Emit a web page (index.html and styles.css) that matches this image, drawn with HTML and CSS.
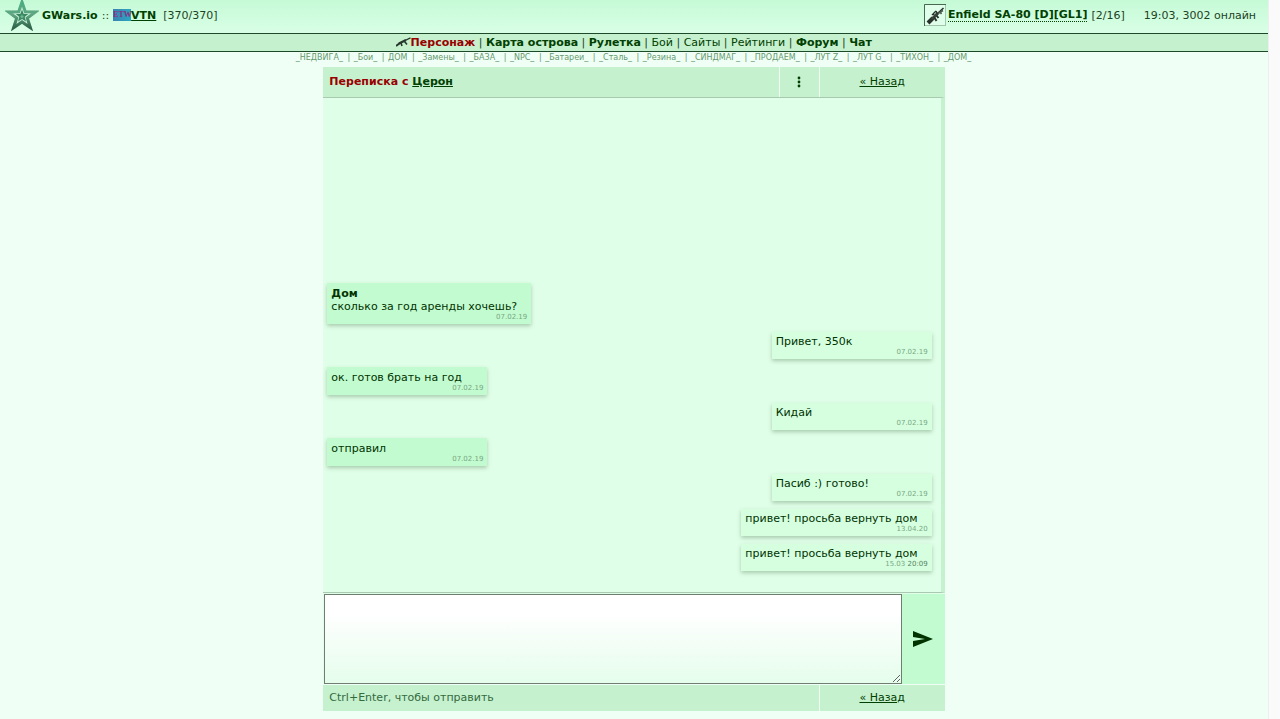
FILE: index.html
```html
<!DOCTYPE html>
<html lang="ru">

<head>
    <meta charset="UTF-8">
    <meta name="viewport" content="width=device-width, initial-scale=1.0">
    <title>GWars.io - Переписка</title>
    <link rel="stylesheet" href="styles.css">
</head>

<body>
    <header class="topbar">
        <svg class="logo" viewBox="0 0 34 32" aria-hidden="true">
            <defs>
                <linearGradient id="star" x1="0" y1="0" x2="0" y2="1">
                    <stop offset="0" stop-color="#4cae80"/>
                    <stop offset="0.5" stop-color="#5fa582"/>
                    <stop offset="1" stop-color="#2f6649"/>
                </linearGradient>
            </defs>
            <path d="M17 0L21.2 11.5L33.5 11.8L23.8 19.3L27.5 31L17 24.2L6.5 31L10.2 19.3L0.5 11.8L12.8 11.5Z" fill="#a9cdb8"/>
            <path d="M17 3L20.3 12.8L30.5 12.9L22.3 19.1L25.4 28.7L17 22.9L8.6 28.7L11.7 19.1L3.5 12.9L13.7 12.8Z" fill="#c8f0d8" stroke="url(#star)" stroke-width="3"/>
            <path d="M17 10.5L18.7 15L23.2 15.1L19.7 18L21 22.5L17 19.9L13 22.5L14.3 18L10.8 15.1L15.3 15Z" fill="#398762"/>
            <path d="M17 15L17.7 16.8L19.4 17L18 18L18.5 19.6L17 18.7L15.5 19.6L16 18L14.6 17L16.3 16.8Z" fill="#6db68d"/>
        </svg>
        <a class="site" href="#">GWars.io</a>
        <span class="colons">::</span>
        <span class="syndicate">ETW</span><a class="player" href="#">VTN</a>
        <span class="health">[370/370]</span>
        <span class="weapon">
            <svg viewBox="0 0 22 22" aria-hidden="true">
                <rect x="0.5" y="0.5" width="21" height="21" fill="#dfffea" stroke="#a3c4ac"/>
                <path d="M0.5 22V0.5H22" fill="none" stroke="#47694f"/>
                <path d="M4 19L9 14" stroke="#28332b" stroke-width="4"/>
                <path d="M8 15L14 9" stroke="#3a463d" stroke-width="3"/>
                <path d="M13 10L19.5 4" stroke="#28332b" stroke-width="1.6"/>
                <path d="M8 11L12 7M10 11L9 9M13 9L12 7" stroke="#28332b" stroke-width="1.4"/>
                <path d="M10 13L12.5 17M12.5 11.5L14.5 14" stroke="#28332b" stroke-width="2"/>
                <path d="M14 9.5L19 6.5M16 8L17.5 10" stroke="#4c5a50" stroke-width="1.5"/>
            </svg>
            <a href="#">Enfield SA-80 [D][GL1]</a> [2/16]
        </span>
        <span class="online">19:03, 3002 онлайн</span>
    </header>

    <nav class="menu">
        <svg class="gun" viewBox="0 0 15 10" aria-hidden="true">
            <path d="M0 9L4 6" stroke="#25382b" stroke-width="2"/>
            <path d="M3 6.5L10 3" stroke="#25382b" stroke-width="2.4"/>
            <path d="M9 3.5L14.5 0.8" stroke="#25382b" stroke-width="1.3"/>
            <path d="M5 6L6 9M8.5 4.5L11 7.5" stroke="#25382b" stroke-width="1.6"/>
        </svg>
        <a class="active" href="#">Персонаж</a> |
        <a class="main" href="#">Карта острова</a> |
        <a class="main" href="#">Рулетка</a> |
        <a href="#">Бой</a> |
        <a href="#">Сайты</a> |
        <a href="#">Рейтинги</a> |
        <a class="main" href="#">Форум</a> |
        <a class="main" href="#">Чат</a>
    </nav>

    <nav class="quick">
        <a href="#">_НЕДВИГА_</a> | <a href="#">_Бои_</a> | <a href="#">ДОМ</a> | <a href="#">_Замены_</a> | <a href="#">_БАЗА_</a> | <a href="#">_NPC_</a> | <a href="#">_Батареи_</a> | <a href="#">_Сталь_</a> | <a href="#">_Резина_</a> | <a href="#">_СИНДМАГ_</a> | <a href="#">_ПРОДАЕМ_</a> | <a href="#">_ЛУТ Z_</a> | <a href="#">_ЛУТ G_</a> | <a href="#">_ТИХОН_</a> | <a href="#">_ДОМ_</a>
    </nav>

    <main class="chat">
        <div class="row head">
            <h1>Переписка с <a href="#">Церон</a></h1>
            <button class="more" type="button" aria-label="Меню">
                <svg viewBox="0 0 4 12" aria-hidden="true">
                    <circle cx="2" cy="2" r="1.4"/>
                    <circle cx="2" cy="6" r="1.4"/>
                    <circle cx="2" cy="10" r="1.4"/>
                </svg>
            </button>
            <div class="back"><a href="#">« Назад</a></div>
        </div>

        <div class="messages">
            <div class="msg in">
                <p><b>Дом</b><br>сколько за год аренды хочешь?</p>
                <time>07.02.19</time>
            </div>
            <div class="msg out">
                <p>Привет, 350к</p>
                <time>07.02.19</time>
            </div>
            <div class="msg in">
                <p>ок. готов брать на год</p>
                <time>07.02.19</time>
            </div>
            <div class="msg out">
                <p>Кидай</p>
                <time>07.02.19</time>
            </div>
            <div class="msg in">
                <p>отправил</p>
                <time>07.02.19</time>
            </div>
            <div class="msg out">
                <p>Пасиб :) готово!</p>
                <time>07.02.19</time>
            </div>
            <div class="msg out">
                <p>привет! просьба вернуть дом</p>
                <time>13.04.20</time>
            </div>
            <div class="msg out">
                <p>привет! просьба вернуть дом</p>
                <time>15.03 <span>20:09</span></time>
            </div>
        </div>

        <form class="compose">
            <textarea aria-label="Сообщение"></textarea>
            <button class="send" type="button" aria-label="Отправить">
                <svg viewBox="0 0 20 16" aria-hidden="true">
                    <path d="M0 0L20 8L0 16V10L12 8L0 6Z"/>
                </svg>
            </button>
        </form>

        <div class="row foot">
            <div class="hint">Ctrl+Enter, чтобы отправить</div>
            <div class="back"><a href="#">« Назад</a></div>
        </div>
    </main>
</body>

</html>
```
FILE: styles.css
```css
* {
    box-sizing: border-box;
}

html {
    background: #fafafa;
    padding-right: 12px;
}

body {
    margin: 0;
    min-height: 100vh;
    display: flex;
    flex-direction: column;
    background: #f0fff5;
    color: #1d4324;
    font-family: Verdana, "DejaVu Sans", sans-serif;
    font-size: 11px;
    line-height: 13px;
    box-shadow: 1px 0 0 #ededf2;
}

a {
    color: #004000;
}

button {
    border: 0;
    padding: 0;
    cursor: pointer;
}

svg {
    display: block;
}

.topbar {
    display: flex;
    align-items: center;
    height: 34px;
    padding: 0 12px 3px 5px;
    background: linear-gradient(#c5fad6, #d9ffe6);
    border-bottom: 1px solid #1d4a29;
    white-space: nowrap;
}

.logo {
    width: 34px;
    height: 32px;
    margin-right: 3px;
}

.site {
    font-weight: bold;
    text-decoration: none;
}

.colons {
    margin: 0 4px;
}

.syndicate {
    width: 18px;
    height: 12px;
    background: linear-gradient(90deg, #3b82b2, #2ba6c0);
    color: #8b2f82;
    font: bold 8px/11px "Liberation Serif", serif;
    text-align: center;
}

.player {
    font-weight: bold;
}

.health {
    margin-left: 7px;
}

.weapon {
    display: flex;
    align-items: center;
    gap: 4px;
    margin-left: auto;
}

.weapon svg {
    width: 22px;
    height: 22px;
    margin-right: -2px;
}

.weapon a {
    font-weight: bold;
    text-decoration: none;
    border-bottom: 1px dotted #004000;
}

.online {
    margin-left: 19px;
}

.menu {
    height: 18px;
    line-height: 17px;
    text-align: center;
    background: #c6f1cf;
    border-bottom: 1px solid #1d4a29;
}

.menu a {
    text-decoration: none;
}

.menu .main,
.menu .active {
    font-weight: bold;
}

.menu .active {
    color: #990000;
    margin-left: -4px;
}

.gun {
    display: inline-block;
    width: 15px;
    height: 10px;
    vertical-align: -1px;
}

.quick {
    height: 15px;
    font-size: 8px;
    line-height: 11px;
    text-align: center;
    color: #669970;
    white-space: nowrap;
}

.quick a {
    margin: 0 2px 0 1px;
    color: #669970;
    text-decoration: none;
}

.chat {
    flex: 1;
    display: flex;
    flex-direction: column;
    width: 49%;
    margin: 0 auto 8px;
}

.row {
    display: flex;
    gap: 1px;
}

.row > * {
    background: #c6f1cf;
}

.row h1,
.hint {
    flex: 1;
    margin: 0;
    padding: 0 6px;
    font-size: 11px;
}

.head {
    height: 30px;
    line-height: 29px;
}

.head h1 {
    color: #990000;
}

.more {
    width: 39px;
}

.more svg {
    width: 4px;
    height: 12px;
    margin: 0 auto;
    fill: #004000;
}

.back {
    width: 125px;
    text-align: center;
}

.messages {
    flex: 1;
    display: flex;
    flex-direction: column;
    justify-content: flex-end;
    gap: 8px;
    padding: 0 9px 21px 4px;
    background: #e0ffe8;
    border-top: 1px solid #aac9b1;
    border-right: 4px solid #c6f1cf;
    border-bottom: 1px solid #aac9b1;
}

.msg {
    display: flex;
    flex-direction: column;
    min-width: 160px;
    padding: 3px 4px 2px;
    color: #003300;
    box-shadow: 0 2px 4px rgba(0, 50, 0, 0.25);
}

.msg p {
    margin: 0 10px 0 0;
}

.msg time {
    align-self: flex-end;
    font-size: 7px;
    line-height: 9px;
    color: #78a882;
}

.msg time span {
    color: #55835f;
}

.in {
    align-self: flex-start;
    padding-top: 4px;
    background: #c3fbd0;
}

.out {
    align-self: flex-end;
    background: #d6ffe0;
}

.compose {
    display: flex;
    height: 91px;
    padding: 1px 0 0 1px;
    background: #e0ffe8;
}

textarea {
    flex: 1;
    height: 90px;
    padding: 4px;
    border: 1px solid #6e7f72;
    background: linear-gradient(#ffffff, #ffffff 20%, #e5fdec);
    font: inherit;
    outline: none;
}

.send {
    width: 43px;
    background: #c3fbd0;
}

.send svg {
    width: 20px;
    height: 16px;
    margin: 0 auto;
    fill: #003300;
}

.foot {
    height: 26px;
    line-height: 26px;
    margin-top: 1px;
}

.hint {
    color: #336b3d;
}
```
